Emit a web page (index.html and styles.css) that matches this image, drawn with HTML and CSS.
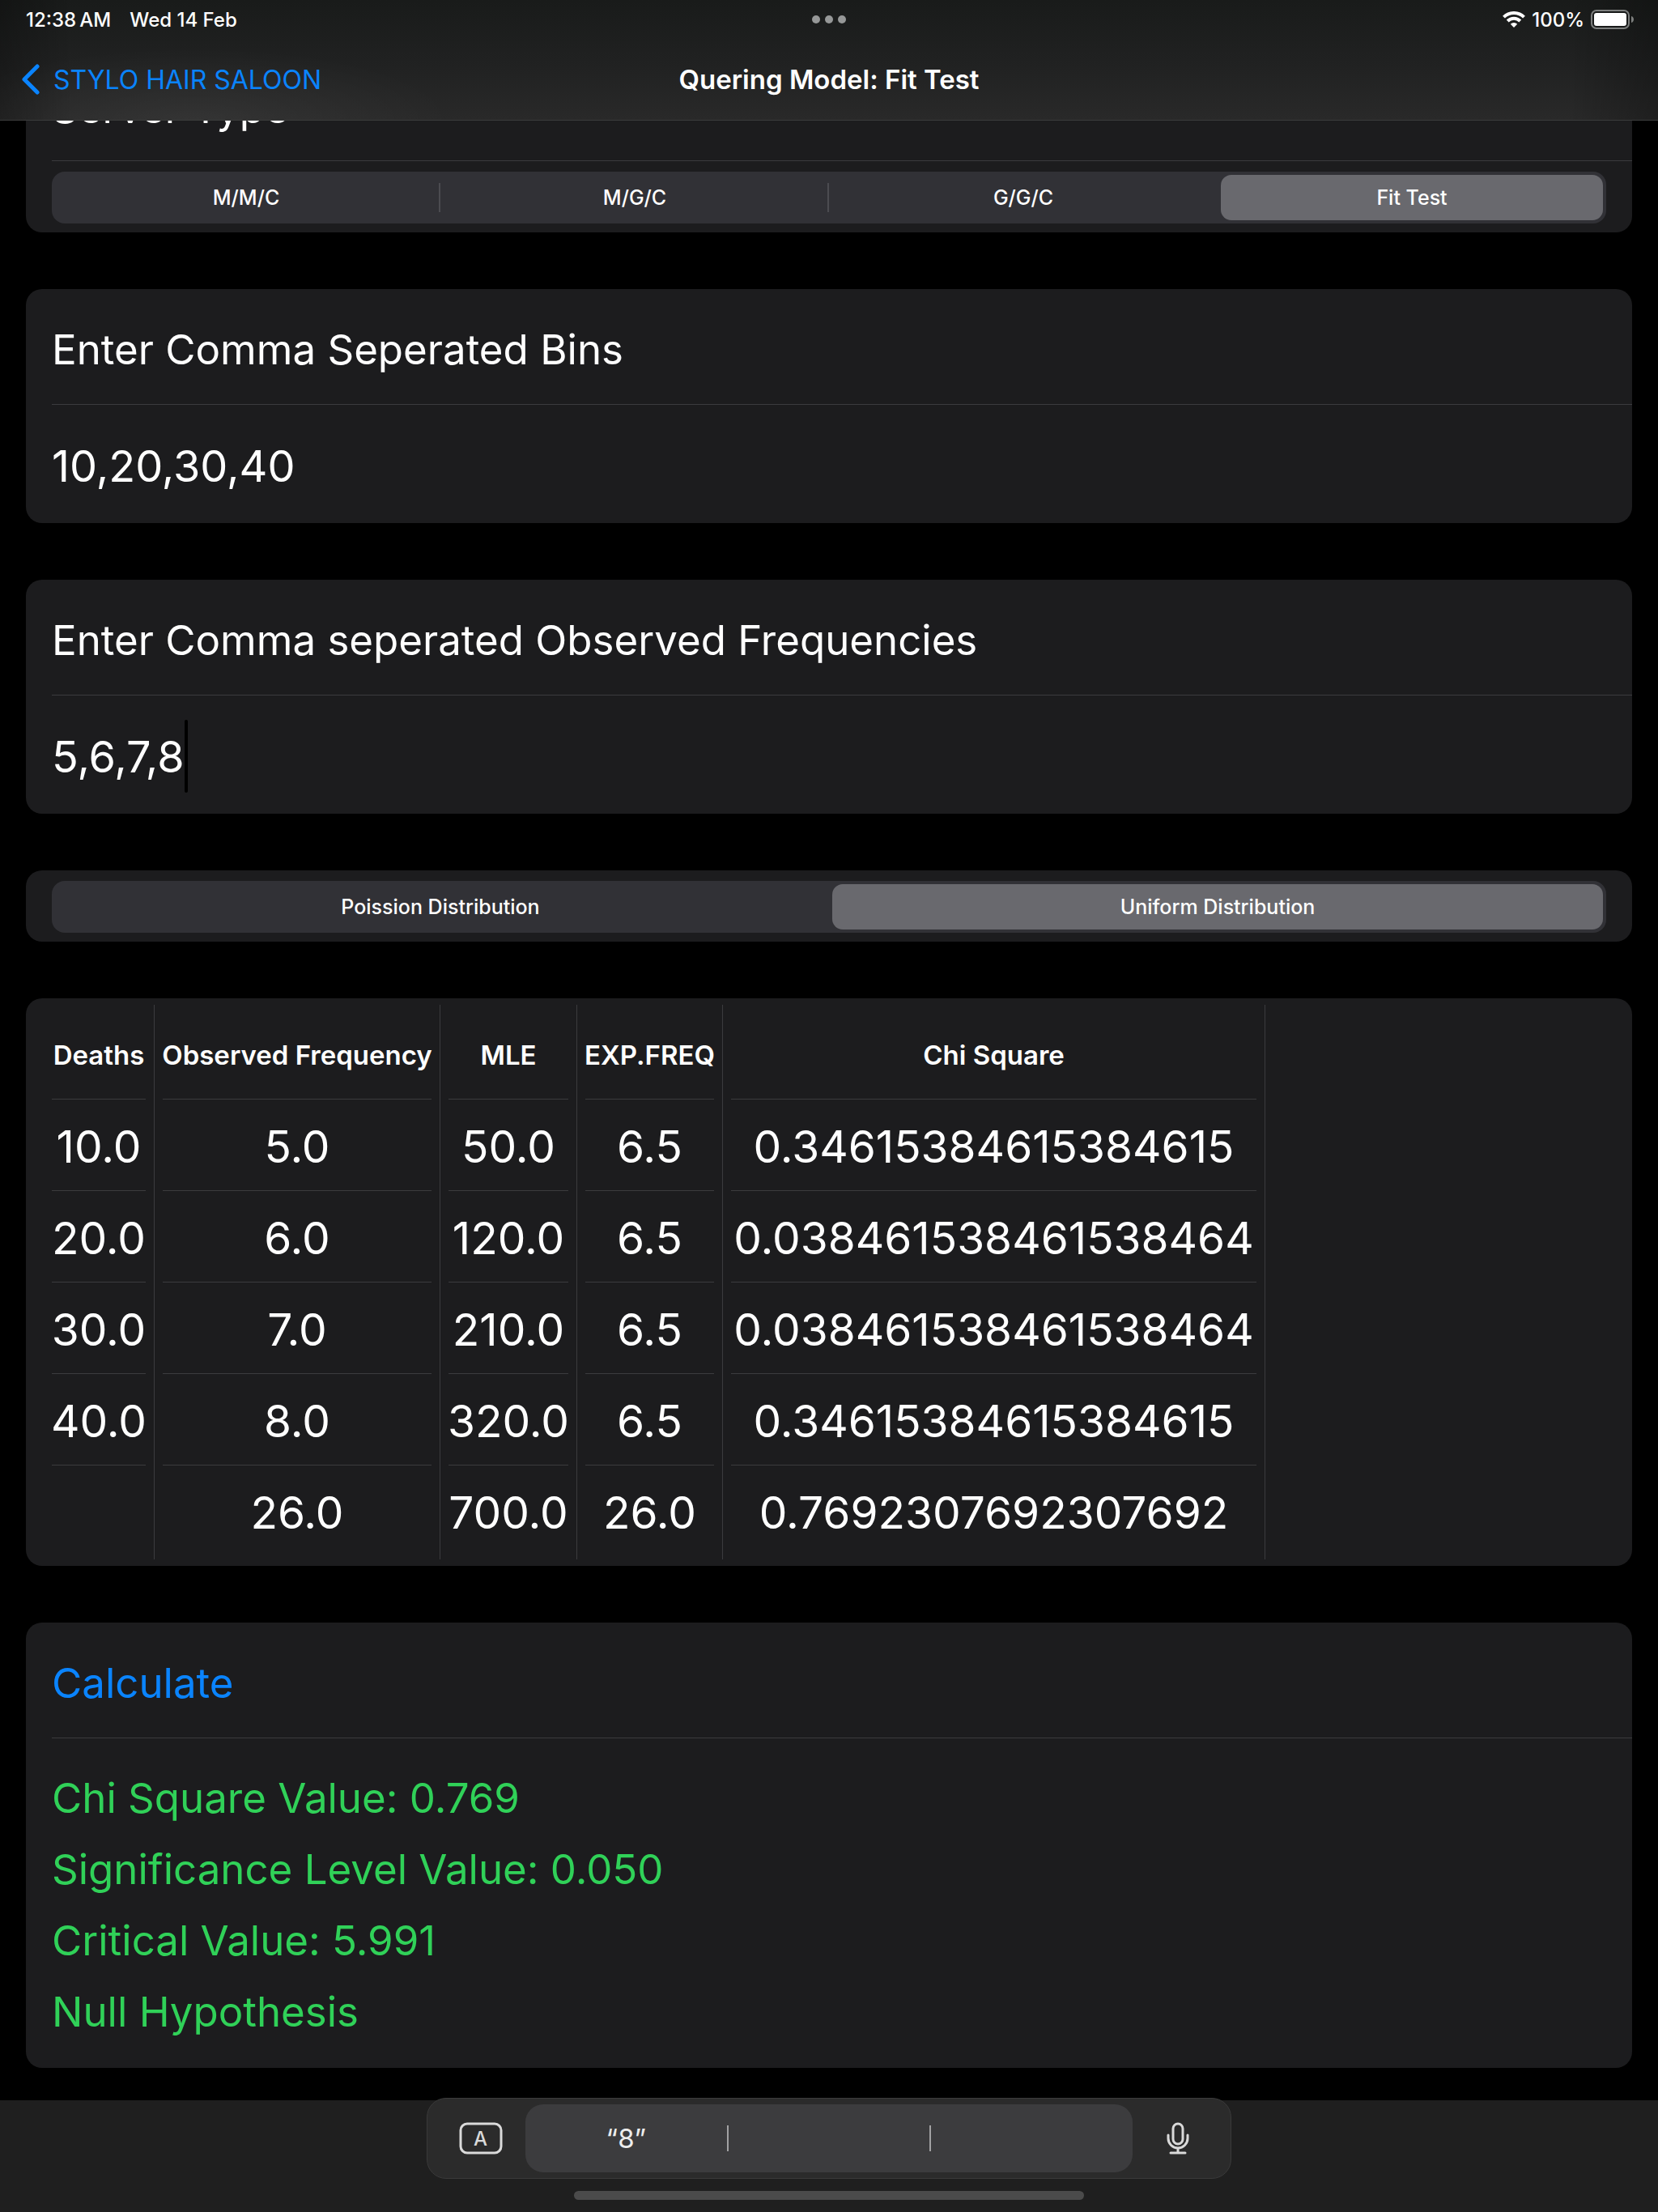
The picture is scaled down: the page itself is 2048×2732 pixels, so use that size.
FILE: index.html
```
<!DOCTYPE html>
<html lang="en">
<head>
<meta charset="utf-8">
<meta name="viewport" content="width=device-width, initial-scale=1">
<title>Quering Model: Fit Test</title>
<link rel="stylesheet" href="styles.css">
</head>
<body>
<header class="topbar">
  <div class="status">
    <div class="status-left"><span>12:38&thinsp;AM</span><span>Wed 14 Feb</span></div>
    <svg class="dots" viewBox="0 0 42 10" aria-hidden="true"><circle cx="5" cy="5" r="5"/><circle cx="21" cy="5" r="5"/><circle cx="37" cy="5" r="5"/></svg>
    <div class="status-right">
      <svg class="wifi" viewBox="0 0 28 20" aria-hidden="true">
        <path d="M1.5 7.2a17.6 17.6 0 0 1 25 0M6.2 12a11 11 0 0 1 15.6 0" fill="none" stroke="#fff" stroke-width="4"/>
        <path d="M14 20l-4.2-4.3a6 6 0 0 1 8.4 0z" fill="#fff"/>
      </svg>
      <span>100%</span>
      <svg class="battery" viewBox="0 0 51 24" aria-hidden="true">
        <rect x="1" y="1" width="46" height="22" rx="6" fill="none" stroke="#7d7f7e" stroke-width="2"/>
        <rect x="4" y="4" width="40" height="16" rx="3" fill="#fff"/>
        <path d="M50 8c4 1 4 7 0 8z" fill="#7d7f7e"/>
      </svg>
    </div>
  </div>
  <nav class="nav">
    <a class="back" href="#">
      <svg class="chevron" viewBox="0 0 23 38" aria-hidden="true"><path d="M20 3L4 19l16 16" fill="none" stroke="currentColor" stroke-width="5" stroke-linecap="round" stroke-linejoin="round"/></svg>
      STYLO HAIR SALOON
    </a>
    <h1 class="nav-title">Quering Model: Fit Test</h1>
  </nav>
</header>

<main class="content">
  <section class="card card-first">
    <h2 class="row title">Server Type</h2>
    <div class="segmented divided">
      <label class="segment"><input type="radio" name="server"><span>M/M/C</span></label>
      <label class="segment"><input type="radio" name="server"><span>M/G/C</span></label>
      <label class="segment"><input type="radio" name="server"><span>G/G/C</span></label>
      <label class="segment"><input type="radio" name="server" checked><span>Fit Test</span></label>
    </div>
  </section>

  <section class="card">
    <label class="row title" for="bins">Enter Comma Seperated Bins</label>
    <div class="row field"><input id="bins" type="text" value="10,20,30,40"></div>
  </section>

  <section class="card">
    <label class="row title" for="freqs">Enter Comma seperated Observed Frequencies</label>
    <div class="row field"><input id="freqs" type="text" value="5,6,7,8"><span class="caret"></span></div>
  </section>

  <section class="card card-picker">
    <div class="segmented">
      <label class="segment"><input type="radio" name="dist"><span>Poission Distribution</span></label>
      <label class="segment"><input type="radio" name="dist" checked><span>Uniform Distribution</span></label>
    </div>
  </section>

  <section class="card card-table">
    <table class="results">
      <colgroup><col class="c-deaths"><col class="c-observed"><col class="c-mle"><col class="c-exp"><col class="c-chi"></colgroup>
      <thead>
        <tr><th><div>Deaths</div></th><th><div>Observed Frequency</div></th><th><div>MLE</div></th><th><div>EXP.FREQ</div></th><th><div>Chi Square</div></th></tr>
      </thead>
      <tbody>
        <tr><td><div>10.0</div></td><td><div>5.0</div></td><td><div>50.0</div></td><td><div>6.5</div></td><td><div>0.34615384615384615</div></td></tr>
        <tr><td><div>20.0</div></td><td><div>6.0</div></td><td><div>120.0</div></td><td><div>6.5</div></td><td><div>0.038461538461538464</div></td></tr>
        <tr><td><div>30.0</div></td><td><div>7.0</div></td><td><div>210.0</div></td><td><div>6.5</div></td><td><div>0.038461538461538464</div></td></tr>
        <tr><td><div>40.0</div></td><td><div>8.0</div></td><td><div>320.0</div></td><td><div>6.5</div></td><td><div>0.34615384615384615</div></td></tr>
      </tbody>
      <tfoot>
        <tr><td><div></div></td><td><div>26.0</div></td><td><div>700.0</div></td><td><div>26.0</div></td><td><div>0.7692307692307692</div></td></tr>
      </tfoot>
    </table>
  </section>

  <section class="card">
    <div class="row title"><button class="calculate" type="button">Calculate</button></div>
    <div class="summary">
      <p>Chi Square Value: 0.769</p>
      <p>Significance Level Value: 0.050</p>
      <p>Critical Value: 5.991</p>
      <p>Null Hypothesis</p>
    </div>
  </section>
</main>

<footer class="dock">
  <div class="toolbar">
    <button class="tool" type="button" aria-label="Keyboard">
      <svg class="key-icon" viewBox="0 0 54 40" aria-hidden="true"><rect x="2" y="2" width="50" height="36" rx="8" fill="none" stroke="currentColor" stroke-width="3"/></svg>
      <span class="key-letter">A</span>
    </button>
    <div class="suggestions">
      <button type="button">“8”</button>
      <button type="button" aria-label="Second suggestion"></button>
      <button type="button" aria-label="Third suggestion"></button>
    </div>
    <button class="tool" type="button" aria-label="Dictate">
      <svg class="mic-icon" viewBox="0 0 28 40" aria-hidden="true" fill="none" stroke="currentColor" stroke-width="3" stroke-linecap="round"><rect x="8" y="2" width="12" height="25" rx="6"/><path d="M2 16v4a12 12 0 0 0 24 0v-4M14 32v6M5 38h18"/></svg>
    </button>
  </div>
  <div class="home"></div>
</footer>
</body>
</html>
```
FILE: styles.css
```
* { box-sizing: border-box; }

body {
  margin: 0;
  min-height: 100vh;
  display: flex;
  flex-direction: column;
  background: #000;
  color: #fff;
  font-family: Inter, "Liberation Sans", sans-serif;
}

h1, h2, p { margin: 0; font-weight: 400; }

button, input {
  margin: 0;
  padding: 0;
  border: 0;
  background: none;
  color: inherit;
  font: inherit;
}

/* Status and navigation */
.topbar {
  border-bottom: 1px solid #3a3b3b;
  background:
    linear-gradient(90deg, rgba(0, 0, 0, 0.25), transparent 90px, transparent calc(100% - 110px), rgba(0, 0, 0, 0.25)),
    radial-gradient(ellipse 320px 90px at 240px 100%, rgba(255, 255, 255, 0.05), transparent),
    linear-gradient(#191b1a, #202121 50%, #292929);
}

.status {
  height: 48px;
  padding: 0 32px;
  display: grid;
  grid-template-columns: 1fr auto 1fr;
  align-items: center;
  font-size: 24px;
  font-weight: 500;
}

.status-left { display: flex; gap: 23px; }
.status-right { display: flex; justify-content: flex-end; align-items: center; gap: 8px; }
.dots { width: 42px; height: 10px; fill: #969898; }
.wifi { width: 28px; height: 20px; }
.battery { width: 51px; height: 24px; overflow: visible; }

.nav {
  height: 100px;
  padding: 0 26px;
  display: grid;
  grid-template-columns: 1fr auto 1fr;
  align-items: center;
}

.back {
  display: flex;
  align-items: center;
  gap: 17px;
  color: #0a84ff;
  font-size: 32px;
  text-decoration: none;
}

.chevron { width: 23px; height: 38px; }
.nav-title { font-size: 33px; font-weight: 600; }

/* Grouped list */
.content {
  padding: 0 32px 40px;
  display: flex;
  flex-direction: column;
  gap: 70px;
  overflow: hidden;
}

.card {
  border-radius: 20px;
  background: #1c1c1e;
}

.row {
  margin-left: 32px;
  padding-top: 4px;
  display: flex;
  align-items: center;
}

.title {
  height: 143px;
  padding-top: 6px;
  border-bottom: 1px solid #3b3b3e;
  font-size: 51px;
}

/* Scrolled part of the way under the navigation bar */
.card-first { margin-top: -93px; padding-bottom: 11px; }
.card-first .title { margin-bottom: 13px; padding-top: 12px; }

.field { height: 146px; font-size: 54px; }
.field input { field-sizing: content; outline: 0; caret-color: transparent; }

.caret {
  width: 4px;
  height: 90px;
  border-radius: 2px;
  background: #000;
}

/* Segmented controls */
.segmented {
  height: 64px;
  margin: 0 32px;
  display: flex;
  border-radius: 16px;
  background: #313136;
  font-size: 25px;
  font-weight: 500;
}

.segment {
  position: relative;
  flex: 1;
  padding: 4px;
  display: flex;
}

.segment input { position: absolute; opacity: 0; }

.segment span {
  flex: 1;
  display: flex;
  align-items: center;
  justify-content: center;
  border-radius: 13px;
}

.segment input:checked + span { background: #69696e; }

.divided .segment:nth-child(1),
.divided .segment:nth-child(2) {
  background: linear-gradient(#4b4b50, #4b4b50) right center / 2px 36px no-repeat;
}

.card-picker { padding: 13px 0 11px; }

/* Results table */
.card-table { padding: 8px 32px; }

.results {
  width: 1499px;
  table-layout: fixed;
  border-collapse: separate;
  border-spacing: 0;
  text-align: center;
  font-size: 55px;
}

.c-deaths { width: 127px; }
.c-observed { width: 353px; }
.c-mle { width: 169px; }
.c-exp { width: 180px; }
.c-chi { width: 670px; }

.results th,
.results td {
  padding: 0 10px;
  border-right: 1px solid #3b3b3e;
}

.results th:first-child,
.results td:first-child { padding-left: 0; }

.results div {
  height: 113px;
  padding-top: 4px;
  display: flex;
  align-items: center;
  justify-content: center;
  border-bottom: 1px solid #3b3b3e;
  white-space: nowrap;
}

.results th div {
  height: 117px;
  padding-top: 8px;
  font-size: 33px;
  font-weight: 600;
}

.results tfoot div { height: 116px; padding-top: 0; border-bottom: 0; }

/* Outcome */
.calculate { color: #0a84ff; }

.summary {
  padding: 30px 32px 25px;
  color: #30d158;
  font-size: 51px;
  line-height: 88px;
}

/* Keyboard shortcut bar */
.dock {
  flex: 1;
  padding-bottom: 14px;
  display: flex;
  flex-direction: column;
  align-items: center;
  gap: 15px;
  background: #1f1f1f;
}

.toolbar {
  width: 994px;
  max-width: 100%;
  height: 100px;
  margin-top: -3px;
  display: flex;
  align-items: center;
  border: 1px solid #3a3a3a;
  border-radius: 24px;
  background: #2b2b2b;
}

.tool {
  flex: 1;
  height: 84px;
  padding-left: 10px;
  display: grid;
  place-items: center;
  color: #dadada;
}

.tool:last-child { padding: 0 10px 0 0; }
.tool > * { grid-area: 1 / 1; }
.key-icon { width: 54px; height: 40px; }
.key-letter { font-size: 24px; font-weight: 500; }
.mic-icon { width: 28px; height: 40px; }

.suggestions {
  width: 750px;
  height: 84px;
  display: flex;
  align-items: center;
  border-radius: 22px;
  background: #3c3c3e;
  color: #ededed;
  font-size: 33px;
}

.suggestions button { flex: 1; height: 32px; line-height: 32px; }
.suggestions button + button { border-left: 2px solid #a2a2a3; }

.home {
  width: 630px;
  max-width: 100%;
  height: 11px;
  border-radius: 6px;
  background: #4b4b4b;
}
```
